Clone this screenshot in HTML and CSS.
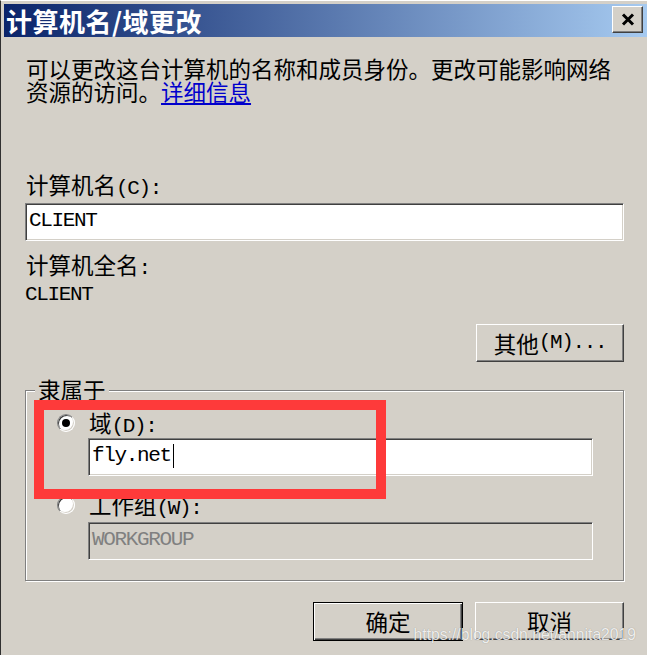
FILE: index.html
```html
<!DOCTYPE html>
<html lang="zh-CN">
<head>
<meta charset="utf-8">
<title>计算机名/域更改</title>
<link rel="stylesheet" href="styles.css">
</head>
<body>
<div class="window">
  <div class="titlebar">
    <span class="title">计算机名/域更改</span>
    <span class="close">
      <svg width="14" height="13" viewBox="0 0 14 13"><path d="M2 1.5 L12 11.5 M12 1.5 L2 11.5" stroke="#000" stroke-width="3" fill="none"/></svg>
    </span>
  </div>
  <div class="content">
    <p class="desc">可以更改这台计算机的名称和成员身份。更改可能影响网络<br>资源的访问。<a class="link" href="#">详细信息</a></p>
    <div class="lbl lbl-first">计算机名<span class="lat">(C):</span></div>
    <div class="field field-name"><span class="lat">CLIENT</span></div>
    <div class="lbl lbl-full">计算机全名<span class="lat">:</span></div>
    <div class="val"><span class="lat">CLIENT</span></div>
    <div class="row-right"><span class="btn btn-more">其他<span class="lat">(M)...</span></span></div>
    <div class="group">
      <span class="legend">隶属于</span>
      <div class="radio-row"><span class="radio checked"></span><span>域<span class="lat">(D):</span></span></div>
      <div class="field field-sub"><span class="lat">fly.net</span><span class="caret"></span></div>
      <div class="radio-row radio-row2"><span class="radio"></span><span>工作组<span class="lat">(W):</span></span></div>
      <div class="field field-sub field-disabled"><span class="lat">WORKGROUP</span></div>
    </div>
    <div class="actions">
      <span class="btn btn-default">确定</span>
      <span class="btn btn-cancel">取消</span>
    </div>
  </div>
  <div class="highlight"></div>
  <div class="watermark">https://blog.csdn.net/annita2019</div>
</div>
</body>
</html>
```
FILE: styles.css
```css
html, body {
  margin: 0;
  padding: 0;
}
body {
  width: 647px;
  height: 655px;
  overflow: hidden;
  background: #d4d0c8;
  font-family: "Noto Sans CJK SC", sans-serif;
  font-size: 22.5px;
  color: #000;
}
.window {
  position: relative;
  height: 655px;
  box-sizing: border-box;
  border-left: 1px solid #303030;
  border-top: 1px solid #ffffff;
}
.titlebar {
  margin: 3px 0 0 3px;
  height: 33px;
  background: linear-gradient(to right, #0a246a, #a6caf0);
  display: flex;
  justify-content: space-between;
  align-items: flex-start;
  padding-left: 2px;
}
.title {
  color: #fff;
  font-weight: 700;
  font-size: 26px;
  line-height: 33px;
  letter-spacing: 0.5px;
}
.close {
  margin: 2px 4px 0 0;
  width: 31px;
  height: 27px;
  box-sizing: border-box;
  background: #d4d0c8;
  border-top: 1px solid #fff;
  border-left: 1px solid #fff;
  border-right: 1px solid #404040;
  border-bottom: 1px solid #404040;
  box-shadow: inset -1px -1px 0 #808080;
  display: flex;
  align-items: center;
  justify-content: center;
}
.content {
  padding: 0 23px 0 24px;
}
.lat {
  font-family: "Liberation Mono", monospace;
  font-size: 21px;
  letter-spacing: -1.35px;
  line-height: 0;
}
.desc {
  margin: 20px 0 0 1px;
  line-height: 23px;
}
.link {
  color: #0000cc;
  text-decoration: underline;
}
.lbl {
  line-height: 23px;
  margin-left: 1px;
}
.lbl-first { margin-top: 70px; }
.lbl-full { margin-top: 12px; }
.field {
  height: 38px;
  box-sizing: border-box;
  background: #fff;
  border-top: 1px solid #808080;
  border-left: 1px solid #808080;
  border-right: 1px solid #fff;
  border-bottom: 1px solid #fff;
  box-shadow: inset 1px 1px 0 #404040, inset -1px -1px 0 #d4d0c8;
  display: flex;
  align-items: center;
  padding: 0 0 3px 3px;
}
.field .lat {
  line-height: 23px;
}
.field-name { margin-top: 7px; }
.val {
  margin-top: 3px;
  line-height: 23px;
}
.row-right {
  margin-top: 22px;
  display: flex;
  justify-content: flex-end;
}
.btn {
  box-sizing: border-box;
  height: 38px;
  background: #d4d0c8;
  border-top: 1px solid #fff;
  border-left: 1px solid #fff;
  border-right: 1px solid #404040;
  border-bottom: 1px solid #404040;
  box-shadow: inset -1px -1px 0 #808080;
  display: flex;
  align-items: center;
  justify-content: center;
  line-height: 23px;
}
.btn-more { width: 148px; }
.group {
  position: relative;
  margin-top: 28px;
  border: 1px solid #808080;
  box-shadow: 1px 1px 0 #fff, inset 1px 1px 0 #fff;
  padding: 20px 30px 20px 0;
}
.legend {
  position: absolute;
  top: -13px;
  left: 9px;
  padding: 0 3px;
  background: #d4d0c8;
  line-height: 23px;
}
.radio-row {
  display: flex;
  align-items: center;
  gap: 14px;
  line-height: 23px;
  padding-left: 31px;
}
.radio-row2 { margin-top: 17px; }
.radio {
  position: relative;
  width: 18px;
  height: 18px;
  box-sizing: border-box;
  border-radius: 50%;
  background: #fff;
  border: 1px solid;
  border-color: #808080 #fff #fff #808080;
  box-shadow: inset 1px 1px 0 #404040, inset -1px -1px 0 #d4d0c8;
}
.radio.checked::after {
  content: "";
  position: absolute;
  left: 4px;
  top: 4px;
  width: 8px;
  height: 8px;
  border-radius: 50%;
  background: #000;
}
.field-sub {
  margin-left: 62px;
  margin-top: 4px;
}
.field-disabled {
  margin-top: 6px;
  background: #d4d0c8;
  color: #808080;
}
.caret {
  display: inline-block;
  width: 1px;
  height: 24px;
  background: #000;
  margin-left: 2px;
}
.actions {
  margin-top: 21px;
  display: flex;
  justify-content: flex-end;
  gap: 12px;
}
.btn-default {
  width: 150px;
  height: 39px;
  border: 1px solid #000;
  box-shadow: inset 1px 1px 0 #fff, inset -1px -1px 0 #404040, inset -2px -2px 0 #808080;
}
.btn-cancel {
  width: 149px;
  height: 38px;
}
.highlight {
  position: absolute;
  left: 33px;
  top: 399px;
  width: 352px;
  height: 99px;
  box-sizing: border-box;
  border: 10px solid #fe3a3a;
}
.watermark {
  position: absolute;
  right: 11px;
  top: 625px;
  font-family: "Liberation Sans", Arial, sans-serif;
  font-size: 15.7px;
  color: rgba(255, 255, 255, 0.85);
  text-shadow: 0 0 1px rgba(0, 0, 0, 0.35);
}
```
